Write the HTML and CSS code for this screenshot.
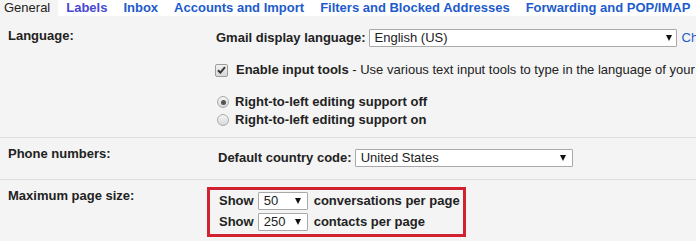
FILE: index.html
```html
<!DOCTYPE html>
<html lang="en">
<head>
    <meta charset="UTF-8">
    <meta name="viewport" content="width=device-width, initial-scale=1.0">
    <title>Settings</title>
    <link rel="stylesheet" href="styles.css">
</head>
<body>
    <div class="tabs">
        <span class="tab active">General</span>
        <a class="tab visited" href="#">Labels</a>
        <a class="tab" href="#">Inbox</a>
        <a class="tab" href="#">Accounts and Import</a>
        <a class="tab" href="#">Filters and Blocked Addresses</a>
        <a class="tab" href="#">Forwarding and POP/IMAP</a>
    </div>

    <div class="settings">
        <div class="row row-language">
            <div class="label">Language:</div>
            <div class="value">
                <div class="line first">
                    <span class="bold">Gmail display language:</span>
                    <div class="select lang">
                        <span>English (US)</span>
                        <i class="arrow"></i>
                    </div>
                    <a class="link" href="#">Change language settings for other Google products</a>
                </div>
                <div class="line check-line">
                    <span class="checkbox">
                        <svg width="9" height="8" viewBox="0 0 9 8"><path d="M1 4.2 3.4 6.6 8 1.2" fill="none" stroke="#333" stroke-width="2"/></svg>
                    </span>
                    <span><b>Enable input tools</b> - Use various text input tools to type in the language of your choice - <a class="link" href="#">Edit tools</a></span>
                </div>
                <div class="radios">
                    <div class="radio-line">
                        <span class="radio checked"></span>
                        <b>Right-to-left editing support off</b>
                    </div>
                    <div class="radio-line">
                        <span class="radio"></span>
                        <b>Right-to-left editing support on</b>
                    </div>
                </div>
            </div>
        </div>

        <div class="row row-phone">
            <div class="label">Phone numbers:</div>
            <div class="value">
                <div class="line">
                    <span class="bold">Default country code:</span>
                    <div class="select country">
                        <span>United States</span>
                        <i class="arrow"></i>
                    </div>
                </div>
            </div>
        </div>

        <div class="row row-pagesize">
            <div class="label">Maximum page size:</div>
            <div class="value">
                <div class="highlight">
                    <div class="line">
                        <span class="bold">Show</span>
                        <div class="select small">
                            <span>50</span>
                            <i class="arrow"></i>
                        </div>
                        <span class="bold">conversations per page</span>
                    </div>
                    <div class="line">
                        <span class="bold">Show</span>
                        <div class="select small">
                            <span>250</span>
                            <i class="arrow"></i>
                        </div>
                        <span class="bold">contacts per page</span>
                    </div>
                </div>
            </div>
        </div>
    </div>
</body>
</html>
```

FILE: styles.css
```css
body {
    margin: 0;
    font-family: "Liberation Sans", Arial, sans-serif;
    font-size: 13px;
    color: #222;
    background: #f4f4f4;
    overflow: hidden;
    white-space: nowrap;
}
.tabs {
    display: flex;
    height: 16px;
    line-height: 16px;
    background: #fff;
}
.tab {
    padding: 0 8px;
    font-weight: bold;
    color: #1d5bcc;
    text-decoration: none;
}
.tab.visited {
    color: #4848d4;
}
.tab.active {
    margin-left: -4px;
    font-weight: normal;
    color: #222;
    background: #f4f4f4;
}
.settings {
    background: #f4f4f4;
}
.row {
    display: grid;
    grid-template-columns: 216px 1fr;
    border-bottom: 1px solid #dedede;
    line-height: 16px;
}
.label {
    padding-left: 8px;
    font-weight: bold;
}
.bold {
    font-weight: bold;
}
.link {
    color: #1d5bcc;
    text-decoration: none;
}
.line {
    display: flex;
    align-items: center;
    height: 18px;
}
.select {
    display: flex;
    align-items: center;
    justify-content: space-between;
    box-sizing: border-box;
    height: 18px;
    padding: 0 6px 0 5px;
    margin: 0 5px 0 3px;
    background: #fff;
    border: 1px solid #a9a9a9;
    border-radius: 1px;
}
.arrow {
    width: 0;
    height: 0;
    border-style: solid;
    border-width: 6px 3.5px 0;
    border-color: #111 transparent transparent;
}

/* language */
.row-language {
    padding: 12px 0 8px;
}
.row-language .first {
    margin-top: 1px;
}
.select.lang {
    width: 308px;
    padding-right: 4px;
}
.check-line {
    height: 16px;
    margin-top: 15px;
}
.checkbox {
    display: flex;
    align-items: center;
    justify-content: center;
    box-sizing: border-box;
    width: 13px;
    height: 13px;
    margin: 0 8px 0 -1px;
    border: 1px solid #9c9c9c;
    border-radius: 2px;
    background: linear-gradient(#f2f2f2, #d8d8d8);
}
.radios {
    margin-top: 15px;
}
.radio-line {
    display: flex;
    align-items: center;
    height: 18px;
}
.radio {
    display: flex;
    align-items: center;
    justify-content: center;
    box-sizing: border-box;
    width: 12px;
    height: 12px;
    margin: 0 6px 0 1px;
    border: 1px solid #aaa;
    border-radius: 50%;
    background: linear-gradient(#f4f4f4, #d9d9d9);
}
.radio.checked::after {
    content: "";
    width: 5px;
    height: 5px;
    border-radius: 50%;
    background: #555;
}

/* phone */
.row-phone {
    padding: 8px 0 12px;
}
.row-phone .value {
    padding: 3px 0 0 2px;
}
.select.country {
    width: 218px;
}

/* page size */
.row-pagesize {
    padding: 8px 0 4px;
}
.highlight {
    display: inline-flex;
    flex-direction: column;
    gap: 3px;
    margin: -1px 0 0 -9px;
    padding: 2px 3px 3px 9px;
    border: 3px solid #d0232f;
}
.select.small {
    width: 50px;
    margin: 0 6px 0 4px;
}
```
